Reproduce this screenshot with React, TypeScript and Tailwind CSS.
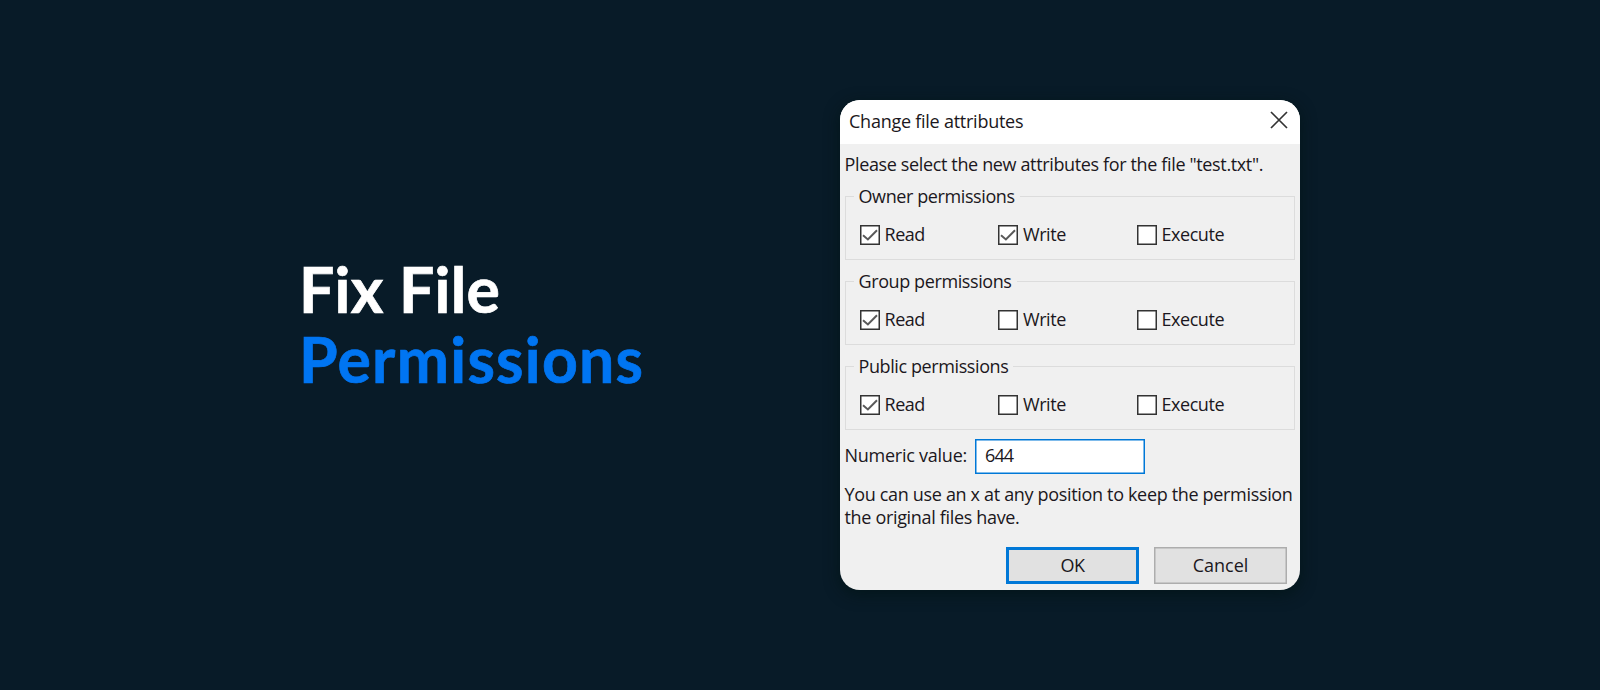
import React, { useState } from 'react';

type Flags = [boolean, boolean, boolean];

const LABELS = ['Read', 'Write', 'Execute'];

const CheckBox: React.FC<{ label: string; checked: boolean; onToggle: () => void }> = ({ label, checked, onToggle }) => (
  <button onClick={onToggle} className="flex h-5 items-center tracking-[-0.45px]">
    <span className="flex size-5 items-center justify-center border border-[#333] bg-white shadow-[inset_0_0_0_0.5px_#333]">
      {checked && (
        <svg viewBox="0 0 18 18" className="size-[18px]" fill="none" stroke="#5a5a5a" strokeWidth="2">
          <path d="M2 9.2 6.9 13.4 16 4.2" />
        </svg>
      )}
    </span>
    <span className="-mt-0.5 ml-[5px] h-6 leading-6">{label}</span>
  </button>
);

const PermissionGroup: React.FC<{ title: string; flags: Flags; onToggle: (i: number) => void }> = ({ title, flags, onToggle }) => (
  <div className="h-16 border border-[#dcdcdc]">
    <div className="-mt-[13px] flex h-6 pl-2">
      <span className="bg-[#f0f0f0] px-[5px] leading-6 tracking-[-0.4px]">{title}</span>
    </div>
    <div className="mt-[17px] grid grid-cols-[138.5px_138.5px_1fr] pl-3.5">
      {LABELS.map((label, i) => (
        <CheckBox key={label} label={label} checked={flags[i]} onToggle={() => onToggle(i)} />
      ))}
    </div>
  </div>
);

export default function App() {
  const [groups, setGroups] = useState<{ title: string; flags: Flags }[]>([
    { title: 'Owner permissions', flags: [true, true, false] },
    { title: 'Group permissions', flags: [true, false, false] },
    { title: 'Public permissions', flags: [true, false, false] },
  ]);

  const toggle = (group: number, flag: number) => {
    setGroups(groups.map((g, i) =>
      i === group ? { ...g, flags: g.flags.map((f, j) => (j === flag ? !f : f)) as Flags } : g
    ));
  };

  const value = groups.map(g => (g.flags[0] ? 4 : 0) + (g.flags[1] ? 2 : 0) + (g.flags[2] ? 1 : 0)).join('');

  return (
    <div className="flex h-[690px] w-[1600px] items-start bg-[#081b28]">
      <h1 className="w-[840px] pt-[254px] pl-[299px] font-['Lato',sans-serif] text-[62.5px] leading-[70px] font-bold text-white [-webkit-text-stroke:0.7px_currentColor]">
        <span className="block tracking-[0.25px]">Fix File</span>
        <span className="block tracking-[1.25px] text-[#0075f2] [-webkit-text-stroke-color:#0075f2]">Permissions</span>
      </h1>

      <div className="mt-[100px] h-[490px] w-[460px] overflow-hidden rounded-[20px] bg-[#f0f0f0] font-['Open_Sans',sans-serif] text-[18px] leading-6 font-[450] text-[#1b1720] shadow-[0_4px_14px_2px_rgba(0,20,20,0.6)]">
        <div className="flex h-11 items-start justify-between bg-white pt-[9px] pr-3 pl-[9px]">
          <span className="tracking-[-0.25px]">Change file attributes</span>
          <svg viewBox="0 0 18 18" className="mt-0.5 size-[18px]" stroke="#333" strokeWidth="1.7">
            <path d="M1 1 17 17M17 1 1 17" />
          </svg>
        </div>

        <div className="pr-[5px] pl-[4.5px]">
          <p className="mt-2 h-6 tracking-[-0.36px] whitespace-nowrap">Please select the new attributes for the file "test.txt".</p>
          <div className="mt-5 flex flex-col gap-[21px]">
            {groups.map((g, i) => (
              <PermissionGroup key={g.title} title={g.title} flags={g.flags} onToggle={j => toggle(i, j)} />
            ))}
          </div>

          <div className="mt-[9px] flex h-[35px] items-start">
            <span className="w-[130.5px] pt-1 tracking-[-0.25px] whitespace-nowrap">Numeric value:</span>
            <input readOnly value={value} className="h-[35px] w-[170px] border border-[#0078d7] bg-white pb-1 pl-[9px] tracking-[-0.9px] shadow-[inset_0_0_0_0.5px_#0078d7] outline-none" />
          </div>

          <p className="mt-[9px] leading-[23px] tracking-[-0.33px] whitespace-nowrap">
            You can use an x at any position to keep the permission<br />the original files have.
          </p>

          <div className="mt-[18px] mr-2 flex justify-end gap-[15px]">
            <button className="h-[37px] w-[133px] border-[3px] border-[#0078d7] bg-[#e1e1e1] pb-0.5 tracking-[-0.5px]">OK</button>
            <button className="h-[37px] w-[133px] border border-[#adadad] bg-[#e1e1e1] pb-0.5 shadow-[inset_0_0_0_0.5px_#adadad]">Cancel</button>
          </div>
        </div>
      </div>
    </div>
  );
}
